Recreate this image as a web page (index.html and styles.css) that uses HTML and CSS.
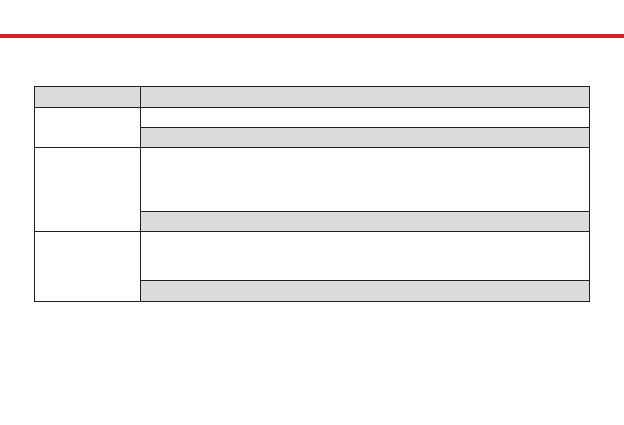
FILE: index.html
```html
<!DOCTYPE html>
<html lang="en">
<head>
<meta charset="utf-8">
<title>Table</title>
<link rel="stylesheet" href="styles.css">
</head>
<body>
<div class="page">
  <div class="rule"></div>
  <div class="table">
    <div class="cell head"></div>
    <div class="cell head"></div>
    <div class="cell label r1"></div>
    <div class="cell h20"></div>
    <div class="cell shade h20"></div>
    <div class="cell label r2"></div>
    <div class="cell h64"></div>
    <div class="cell shade h20"></div>
    <div class="cell label r3"></div>
    <div class="cell h49"></div>
    <div class="cell shade h21"></div>
  </div>
</div>
</body>
</html>
```
FILE: styles.css
```css
* { box-sizing: border-box; }
html, body { margin: 0; padding: 0; background: #fff; }
body { font-family: "Liberation Sans", Arial, sans-serif; }
.page { width: 624px; height: 425px; padding-top: 34px; }
.rule { height: 4px; background: #d42128; }
.table {
  margin: 48px 0 0 34px;
  width: 556px;
  display: grid;
  grid-template-columns: 106px 449px;
  border-top: 1px solid #231f20;
  border-left: 1px solid #231f20;
}
.cell {
  border-right: 1px solid #231f20;
  border-bottom: 1px solid #231f20;
}
.head { height: 21px; background: #dcdcdc; }
.shade { background: #dcdcdc; }
.h20 { height: 20px; }
.h21 { height: 21px; }
.h49 { height: 49px; }
.h64 { height: 64px; }
.r1 { grid-row: span 2; }
.r2 { grid-row: span 2; }
.r3 { grid-row: span 2; }
```
